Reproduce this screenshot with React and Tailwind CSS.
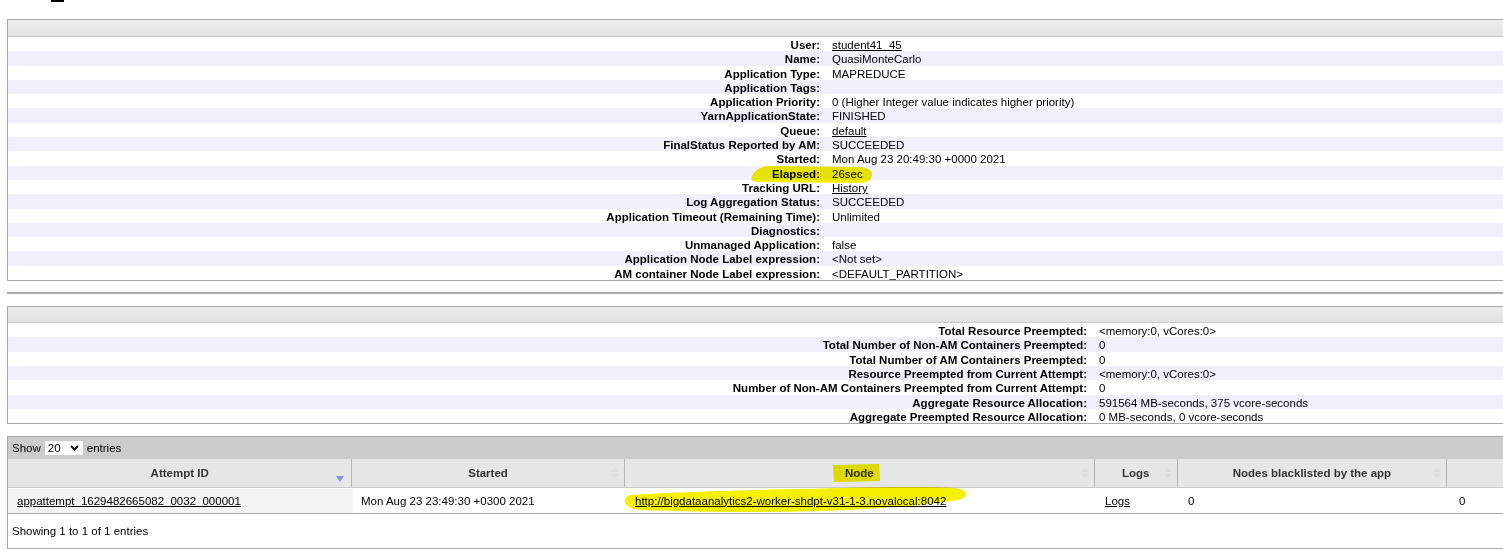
import React from "react";

const APP_INFO = [
  ["User", "student41_45", true],
  ["Name", "QuasiMonteCarlo"],
  ["Application Type", "MAPREDUCE"],
  ["Application Tags", ""],
  ["Application Priority", "0 (Higher Integer value indicates higher priority)"],
  ["YarnApplicationState", "FINISHED"],
  ["Queue", "default", true],
  ["FinalStatus Reported by AM", "SUCCEEDED"],
  ["Started", "Mon Aug 23 20:49:30 +0000 2021"],
  ["Elapsed", "26sec"],
  ["Tracking URL", "History", true],
  ["Log Aggregation Status", "SUCCEEDED"],
  ["Application Timeout (Remaining Time)", "Unlimited"],
  ["Diagnostics", ""],
  ["Unmanaged Application", "false"],
  ["Application Node Label expression", "<Not set>"],
  ["AM container Node Label expression", "<DEFAULT_PARTITION>"],
];

const RESOURCE_INFO = [
  ["Total Resource Preempted", "<memory:0, vCores:0>"],
  ["Total Number of Non-AM Containers Preempted", "0"],
  ["Total Number of AM Containers Preempted", "0"],
  ["Resource Preempted from Current Attempt", "<memory:0, vCores:0>"],
  ["Number of Non-AM Containers Preempted from Current Attempt", "0"],
  ["Aggregate Resource Allocation", "591564 MB-seconds, 375 vcore-seconds"],
  ["Aggregate Preempted Resource Allocation", "0 MB-seconds, 0 vcore-seconds"],
];

const COLUMNS = [
  { title: "Attempt ID", w: "w-[345px]", sorted: true },
  { title: "Started", w: "w-[273px]" },
  { title: "Node", w: "w-[471px]" },
  { title: "Logs", w: "w-[83px]" },
  { title: "Nodes blacklisted by the app", w: "w-[270px]" },
  { title: "", w: "w-[70px]" },
];

function InfoPanel({ rows, cols, headerH }) {
  return (
    <div className="ml-[7px] w-[1510px] border-y border-l border-[#a9a9a9]">
      <div className={`${headerH} border-b border-[#c9c9c9] bg-gradient-to-b from-[#ededed] to-[#e2e2e2]`} />
      {rows.map(([label, value, link], i) => (
        <div
          key={label}
          className={`grid ${cols} h-[14.3px] pt-px leading-[14.3px] ${i % 2 ? "bg-[#f0f0fc]" : "bg-white"}`}
        >
          <div className="pr-[3px] text-right font-bold">{label}:</div>
          <div className="pl-[9px] whitespace-nowrap">
            {link ? <a className="underline">{value}</a> : value}
          </div>
        </div>
      ))}
    </div>
  );
}

function SortIcon({ active }) {
  if (active) {
    return (
      <svg width="8" height="6" viewBox="0 0 8 6" className="absolute right-[7px] top-[17px]">
        <path d="M0 0H8L4 6Z" fill="#8a93d8" />
      </svg>
    );
  }
  return (
    <svg width="7" height="12" viewBox="0 0 7 12" className="absolute right-[6px] top-[8px]">
      <path d="M0 5L3.5 0L7 5Z M0 7H7L3.5 12Z" fill="#dcdcdc" />
    </svg>
  );
}

function AttemptTable() {
  return (
    <div className="ml-[7px] mt-[12px] w-[1510px] border-l border-t border-[#a9a9a9]">
      <div className="flex h-[22px] items-center bg-[#cccccc] pl-[4px]">
        <span>Show</span>
        <span className="ml-[4px] flex h-[14px] w-[38px] items-center justify-between bg-white pl-[3px] pr-[4px]">
          <span>20</span>
          <svg width="9" height="6" viewBox="0 0 9 6">
            <path d="M1 1L4.5 4.5L8 1" fill="none" stroke="#111" strokeWidth="2" />
          </svg>
        </span>
        <span className="ml-[4px]">entries</span>
      </div>
      <div className="flex h-[29px] border-b border-[#c9c9c9] bg-[#e6e6e6]">
        {COLUMNS.map((c, i) => (
          <div
            key={i}
            className={`relative flex ${c.w} items-center justify-center border-r border-[#b4b4b4] font-bold text-[#333]`}
          >
            {c.title}
            {c.title && <SortIcon active={c.sorted} />}
          </div>
        ))}
      </div>
      <div className="flex h-[26px] items-center border-b border-[#a9a9a9] pt-px">
        <div className="flex h-full w-[345px] items-center bg-[#f4f4f4] pl-[9px]">
          <a className="underline">appattempt_1629482665082_0032_000001</a>
        </div>
        <div className="w-[273px] pl-[8px]">Mon Aug 23 23:49:30 +0300 2021</div>
        <div className="w-[471px] pl-[9px]">
          <a className="underline">http://bigdataanalytics2-worker-shdpt-v31-1-3.novalocal:8042</a>
        </div>
        <div className="w-[83px] pl-[8px]">
          <a className="underline">Logs</a>
        </div>
        <div className="w-[270px] pl-[8px]">0</div>
        <div className="pl-[9px]">0</div>
      </div>
      <div className="flex h-[35px] items-center border-b border-[#a9a9a9] pl-[4px]">
        Showing 1 to 1 of 1 entries
      </div>
    </div>
  );
}

export default function App() {
  return (
    <div className="relative h-[553px] w-[1503px] overflow-hidden bg-white font-['Liberation_Sans',Arial,sans-serif] text-[11.5px] text-black">
      <div className="h-[19px] pl-[51px]">
        <div className="h-[2px] w-[13px] bg-black" />
      </div>

      <InfoPanel rows={APP_INFO} cols="grid-cols-[815px_1fr]" headerH="h-[17px]" />

      <div className="ml-[7px] mt-[11px] h-[2px] w-[1510px] bg-[#a9a9a9]" />

      <div className="mt-[12px]">
        <InfoPanel rows={RESOURCE_INFO} cols="grid-cols-[1082px_1fr]" headerH="h-[16px]" />
      </div>

      <AttemptTable />

      {/* marker highlights drawn over the page */}
      <svg
        className="pointer-events-none absolute left-0 top-0 mix-blend-multiply"
        width="1503"
        height="553"
        viewBox="0 0 1503 553"
      >
        <g fill="#f4f000">
          <path d="M767 166 L860 167 Q873 168 872 176 Q871 183 860 183 L757 182 Q749 181 752 176 Q755 168 767 166 Z" />
          <path d="M833 465 L879 464 L880 481 L834 482 Z" />
          <path d="M630 495 C680 492 740 490 800 489 C860 487 930 486 955 488 C969 490 970 497 958 500 C930 505 880 509 820 511 C760 513 700 512 640 510 C624 509 621 498 630 495 Z" />
        </g>
      </svg>
    </div>
  );
}
